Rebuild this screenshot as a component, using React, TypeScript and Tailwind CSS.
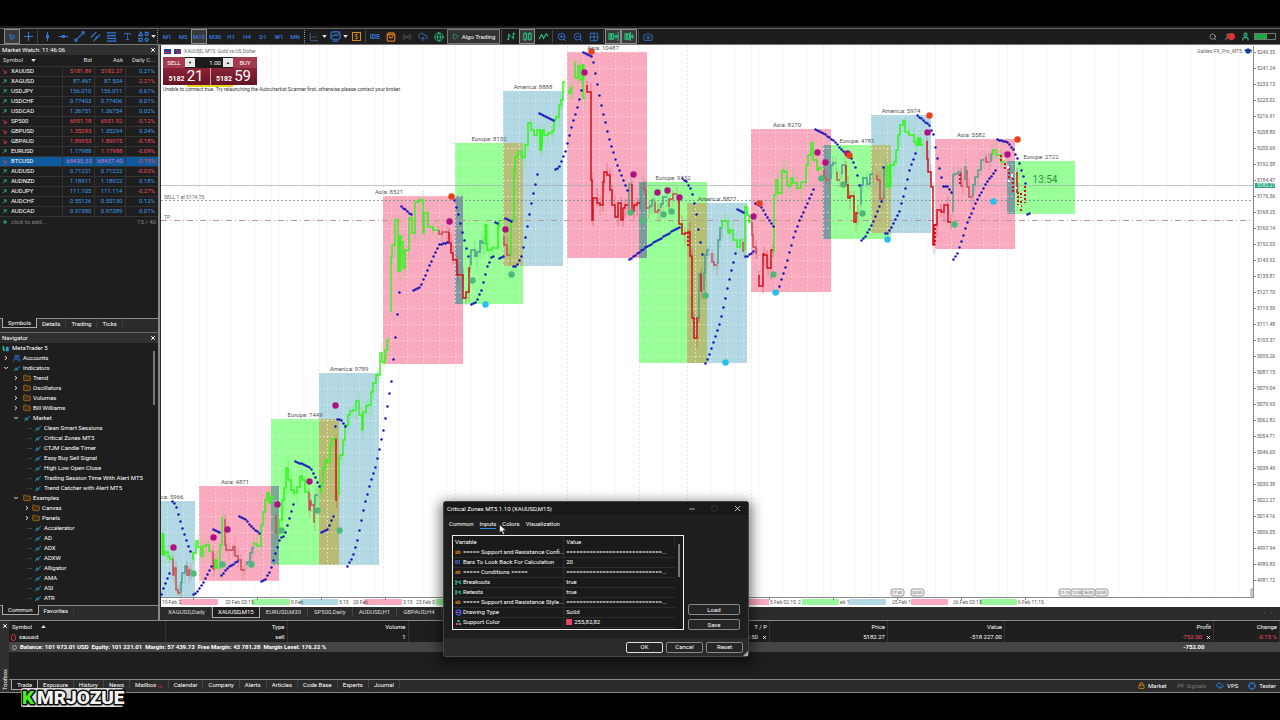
import { ReactNode } from 'react';
import {
  Camera,
  ChartLine,
  ChevronDown,
  ChevronRight,
  CloudUpload,
  Crosshair,
  DollarSign,
  Folder,
  Globe,
  GraduationCap,
  Grid2x2,
  Lock,
  Minus,
  MousePointer2,
  Play,
  Plus,
  Radio,
  Search,
  ShoppingBag,
  Square,
  Type,
  User,
  Users,
  X,
  ZoomIn,
  ZoomOut,
} from 'lucide-react';

type Point = [number, number];
type Direction = 'up' | 'down';

interface Quote {
  symbol: string;
  direction: Direction;
  bid: string;
  ask: string;
  change: string;
  bidColour: string;
  askColour: string;
}

const BLUE = 'text-[#3f9bea]';
const RED = 'text-[#f04c5c]';
const GREEN = 'text-[#26c281]';

const quote = (
  symbol: string,
  direction: Direction,
  bid: string,
  ask: string,
  change: string,
  bidColour = BLUE,
  askColour = bidColour,
): Quote => ({ symbol, direction, bid, ask, change, bidColour, askColour });

const quotes: Quote[] = [
  quote('XAUUSD', 'down', '5181.89', '5182.27', '0.21%', RED),
  quote('XAGUSD', 'up', '87.467', '87.504', '-2.21%'),
  quote('USDJPY', 'up', '156.010', '156.011', '0.61%'),
  quote('USDCHF', 'up', '0.77403', '0.77406', '0.01%'),
  quote('USDCAD', 'up', '1.36751', '1.36754', '0.02%'),
  quote('SP500', 'down', '6951.18', '6951.92', '-0.12%', RED),
  quote('GBPUSD', 'down', '1.35293', '1.35294', '0.34%', RED, BLUE),
  quote('GBPAUD', 'down', '1.89953', '1.89975', '-0.18%', RED),
  quote('EURUSD', 'up', '1.17988', '1.17988', '-0.09%', BLUE, RED),
  quote('BTCUSD', 'down', '68435.33', '68437.40', '-0.75%', 'text-[#c878c8]'),
  quote('AUDUSD', 'up', '0.71221', '0.71222', '-0.03%'),
  quote('AUDNZD', 'up', '1.18911', '1.18922', '0.18%'),
  quote('AUDJPY', 'up', '111.105', '111.114', '-0.27%'),
  quote('AUDCHF', 'up', '0.55126', '0.55130', '0.12%'),
  quote('AUDCAD', 'up', '0.97380', '0.97389', '0.01%'),
];

interface TreeItem {
  label: string;
  level: 0 | 1 | 2 | 3;
  icon: 'app' | 'users' | 'indicator' | 'folder';
  state?: 'open' | 'closed';
}

const leaf = (label: string): TreeItem => ({
  label,
  level: 3,
  icon: 'indicator',
});

const tree: TreeItem[] = [
  { label: 'MetaTrader 5', level: 0, icon: 'app' },
  { label: 'Accounts', level: 1, icon: 'users', state: 'closed' },
  { label: 'Indicators', level: 1, icon: 'indicator', state: 'open' },
  { label: 'Trend', level: 2, icon: 'folder', state: 'closed' },
  { label: 'Oscillators', level: 2, icon: 'folder', state: 'closed' },
  { label: 'Volumes', level: 2, icon: 'folder', state: 'closed' },
  { label: 'Bill Williams', level: 2, icon: 'folder', state: 'closed' },
  { label: 'Market', level: 2, icon: 'indicator', state: 'open' },
  leaf('Clean Smart Sessions'),
  leaf('Critical Zones MT5'),
  leaf('CTJM Candle Timer'),
  leaf('Easy Buy Sell Signal'),
  leaf('High Low Open Close'),
  leaf('Trading Session Time With Alert MT5'),
  leaf('Trend Catcher with Alert MT5'),
  { label: 'Examples', level: 2, icon: 'folder', state: 'open' },
  { label: 'Canvas', level: 3, icon: 'folder', state: 'closed' },
  { label: 'Panels', level: 3, icon: 'folder', state: 'closed' },
  leaf('Accelerator'),
  leaf('AD'),
  leaf('ADX'),
  leaf('ADXW'),
  leaf('Alligator'),
  leaf('AMA'),
  leaf('ASI'),
  leaf('ATR'),
];

const zoneColours = { asia: '#f9aabf', europe: '#98ff96', america: '#b2d9e3' };

interface Zone {
  kind: keyof typeof zoneColours;
  label: string;
  labelX: number;
  box: [number, number, number, number];
}

const zones: Zone[] = [
  { kind: 'america', label: 'ca: 5966', labelX: 172, box: [161, 501, 195, 597] },
  { kind: 'asia', label: 'Asia: 4871', labelX: 235, box: [199, 486, 279, 581] },
  { kind: 'europe', label: 'Europe: 7449', labelX: 305, box: [271, 419, 339, 565] },
  { kind: 'america', label: 'America: 9789', labelX: 349, box: [319, 373, 379, 565] },
  { kind: 'asia', label: 'Asia: 8521', labelX: 389, box: [383, 196, 463, 364] },
  { kind: 'europe', label: 'Europe: 8152', labelX: 489, box: [455, 143, 523, 304] },
  { kind: 'america', label: 'America: 8888', labelX: 533, box: [503, 91, 563, 266] },
  { kind: 'asia', label: 'Asia: 10487', labelX: 603, box: [567, 52, 647, 258] },
  { kind: 'europe', label: 'Europe: 9132', labelX: 673, box: [639, 182, 707, 363] },
  { kind: 'america', label: 'America: 8877', labelX: 717, box: [687, 203, 747, 363] },
  { kind: 'asia', label: 'Asia: 8270', labelX: 787, box: [751, 129, 831, 292] },
  { kind: 'europe', label: 'Europe: 4781', labelX: 857, box: [823, 145, 891, 239] },
  { kind: 'america', label: 'America: 5974', labelX: 901, box: [871, 115, 931, 233] },
  { kind: 'asia', label: 'Asia: 5582', labelX: 971, box: [935, 139, 1015, 249] },
  { kind: 'europe', label: 'Europe: 2722', labelX: 1041, box: [1007, 161, 1075, 214] },
];

const overlaps: [number, number, number, number, string][] = [
  [271, 486, 279, 565, '#7ba796'],
  [319, 419, 339, 565, '#b9bb74'],
  [455, 196, 463, 304, '#7c9c9f'],
  [503, 143, 523, 266, '#b9bf7c'],
  [639, 182, 647, 258, '#7c9c9f'],
  [687, 203, 707, 363, '#b3bf74'],
  [823, 145, 831, 239, '#7c9c9f'],
  [871, 145, 891, 233, '#b9c07c'],
  [1007, 161, 1015, 214, '#7c9c9f'],
];

const sessionStarts = [
  199, 271, 319, 383, 455, 503, 567, 639, 687, 751, 823, 871, 935, 1007,
];

const parse = (text: string): Point[] =>
  text.split(' ').map((pair) => pair.split(',').map(Number) as Point);

const sar = [
  '161,594 163,588 169,573',
  '172,501 175,504 179,517 183,531 187,543 191,553',
  '193,594 197,591 203,582 208,572 212,564',
  '213,529 220,532',
  '221,575 228,567 238,560',
  '239,516 245,519 251,526 259,533',
  '261,581 265,579 270,570 275,553 280,537 284,535 288,521 293,504',
  '295,461 303,464 310,467 314,475 319,486',
  '321,532 327,529 333,516',
  '335,426 337,419 339,419 342,421 346,428',
  '347,566 352,557 357,540 364,505 370,482 375,467 380,444 383,430 391,381 399,292',
  '401,206 412,215',
  '413,290 420,286 427,270 434,254 439,244 448,242',
  '454,200 459,218 463,236 467,252 469,260',
  '471,304 476,301 481,290 487,266 491,257 494,256',
  '495,222 498,223',
  '499,258 503,256',
  '505,218 512,221',
  '513,266 516,266 521,256 525,237 531,203 537,174',
  '539,113 553,120',
  '555,169 559,166 565,151 571,127 578,104 581,90',
  '583,52 591,56 593,62 595,73 597,84 601,105 609,139 617,165 627,190',
  '629,259 647,246 680,226',
  '682,178 686,181 691,190 695,207 699,236 703,260',
  '705,363 708,357 713,342 719,324 723,307 729,279 735,253',
  '737,209 743,212',
  '745,256 747,256 754,250',
  '755,203 760,205 767,217 774,227',
  '777,292 781,279 785,267 793,237 799,220 807,203 813,189',
  '815,129 823,133 833,140 842,150 849,157 852,159 856,170 859,185',
  '861,240 865,236 873,221 881,201',
  '883,167 884,167',
  '885,233 887,233 891,227 899,211 905,188 909,170 915,153',
  '917,115 929,125 933,134 935,147 939,168 943,186 947,186 951,192',
  '953,259 957,253 961,241 967,222 975,203 985,184 995,170',
  '997,139 1007,142 1013,149 1019,163 1025,183',
  '1027,214 1029,213',
].map(parse);

// one dot per bar, the bars are two units apart
function dotsAlong(points: Point[]): Point[] {
  const dots: Point[] = [];
  const last = points[points.length - 1][0];
  for (let x = points[0][0]; x <= last; x += 2) {
    const i = Math.max(
      1,
      points.findIndex((p) => p[0] >= x),
    );
    const [x0, y0] = points[i - 1];
    const [x1, y1] = points[i];
    dots.push([x, y0 + ((y1 - y0) * (x - x0)) / (x1 - x0)]);
  }
  return dots;
}

const runColours = {
  lime: '#35f51e',
  red: '#c8505a',
  strong: '#d3121c',
  teal: '#4f9f8d',
};

const runs: [keyof typeof runColours, string][] = [
  ['lime', '163,533 165,555 168,552 170,557 173,559'],
  ['red', '173,559 174,575 176,568 178,590 180,593'],
  ['teal', '181,593 182,582 185,573 187,566'],
  ['red', '187,566 189,575 191,570'],
  ['lime', '193,560 196,553 198,541 201,547 203,556 206,546 209,545 211,551'],
  ['red', '213,551 214,569 215,560'],
  ['lime', '215,568 217,560 220,568 222,545 223,518'],
  ['red', '225,519 226,545 229,550 233,550 235,547 238,556 241,560 243,570 245,570'],
  ['teal', '247,565 250,562 252,553 254,548'],
  ['lime', '254,542 257,544 261,546 263,525 265,512 267,500 269,493 271,503 274,497'],
  ['red', '276,515 277,533'],
  ['lime', '279,535 282,520 284,500 286,488 288,468 291,480 294,490 297,493 300,487 302,476 305,480 308,492'],
  ['red', '309,492 310,510 311,501 314,505 315,522'],
  ['teal', '315,506 316,495 318,495'],
  ['lime', '321,493 323,485 325,468 327,460 330,462 332,445 335,439'],
  ['strong', '336,439 337,500'],
  ['lime', '339,495 340,458 343,455 345,440 348,425 350,415 353,411 356,410 359,401 362,415 363,430 366,412 368,406 371,405 373,392 376,383 378,375 380,375 382,353 385,362 387,350 389,340'],
  ['lime', '391,312 392,257 395,245 398,220 400,271 403,242 405,268 409,250 412,218 415,233 419,202 423,200 424,233 428,213 433,227 438,230'],
  ['red', '439,230 442,234 447,232 449,232'],
  ['strong', '449,232 451,243 453,253 457,260 458,275 463,275 466,298 469,292 470,268'],
  ['teal', '471,265 475,250 477,256 480,252 482,241 484,243'],
  ['lime', '486,224 487,244 489,250 492,250 498,248 499,226 501,221'],
  ['red', '504,236 507,245 510,255'],
  ['lime', '511,256 514,220 515,170 518,157 522,152 525,157 528,145 531,123 534,130 537,135 540,130 541,150 542,145 544,130 548,135 552,133 554,131 556,120 559,117 561,105 563,100 565,82'],
  ['lime', '569,90 571,93 573,88'],
  ['lime', '575,62 578,78 580,66 583,80 585,98'],
  ['strong', '587,85 591,92 592,180 593,220 597,198 600,203 603,205 604,182 607,172 610,175 612,190 615,205 618,217 621,203 623,220 625,208 628,205'],
  ['teal', '629,212 631,184'],
  ['strong', '632,184 634,211 637,205 640,203'],
  ['teal', '641,207 643,184'],
  ['red', '644,184 646,190 649,208'],
  ['teal', '650,208 652,206 654,200'],
  ['red', '655,202 658,212 660,210'],
  ['teal', '661,208 663,204 667,197'],
  ['red', '669,207 673,199 677,194'],
  ['strong', '679,200 682,224 685,234 688,233 690,232 692,256 694,318 697,338 699,318'],
  ['teal', '699,318 702,274'],
  ['strong', '701,274 702,291'],
  ['teal', '704,290 705,273 707,255 709,250'],
  ['red', '712,253 714,262 717,265'],
  ['teal', '718,264 720,240 722,228'],
  ['lime', '722,228 725,221 728,221 730,233 733,230 737,240 740,247 742,240'],
  ['red', '743,242 744,251'],
  ['lime', '745,250 747,207 749,215 751,222'],
  ['red', '752,222 753,235 756,247 757,253'],
  ['strong', '759,275 763,286 764,254 767,255 768,268 771,268 773,250'],
  ['lime', '774,253 776,195 778,180 782,193 784,170 787,172 788,185 791,186 793,178 797,183 801,188 806,182 808,165 811,155 813,143 817,160 819,170 822,168'],
  ['red', '824,170 826,178 829,180'],
  ['teal', '831,179 833,165 836,163'],
  ['red', '837,172 840,180'],
  ['teal', '842,174 845,165'],
  ['strong', '846,165 848,185 850,198 854,196 856,222 858,213'],
  ['teal', '861,205 863,185 867,178 870,184 873,174'],
  ['red', '877,175 880,180 883,199'],
  ['teal', '884,199 885,168'],
  ['lime', '887,165 890,187 894,165 896,162 898,150 900,135 903,125 905,121 909,132 914,135 916,142 918,145 920,138 923,145'],
  ['strong', '927,141 928,159 931,172 933,187 934,245 937,225 941,210 944,212 948,205 951,222'],
  ['teal', '953,212 954,175 958,174 961,172'],
  ['red', '961,172 963,186'],
  ['teal', '965,180 966,167'],
  ['red', '967,170 969,187 972,197'],
  ['teal', '973,197 975,185 978,177 981,170 984,160'],
  ['red', '986,157 989,162'],
  ['teal', '991,162 992,154'],
  ['lime', '993,155 996,150 1001,155 1005,162'],
  ['strong', '1017,172 1018,192'],
];

// vertical bodies joined by short level strokes
const steps = (points: Point[]) =>
  points
    .map(([x, y], i) => (i === 0 ? `M${x} ${y}` : `V${y}H${x}`))
    .join('');

const wicks = (points: Point[]) =>
  points
    .map(([x, y], i) => `M${x} ${y - 4 - ((i * 5) % 7)}V${y + 5 + ((i * 3) % 8)}`)
    .join('');

const markers: [string, string][] = [
  [
    '#b01283',
    '173,547 213,537 227,529 277,504 309,481 335,405 449,221 505,229 584,72 633,174 657,192 667,190 679,197 753,216 817,152 825,162 847,153 927,132 1007,154',
  ],
  [
    '#4dba7c',
    '193,573 222,564 251,564 281,530 317,510 339,530 472,280 511,274 630,212 642,220 663,214 671,211 705,295 773,274 821,178 843,184 862,213 954,224',
  ],
  ['#e8421c', '451,196 591,51 759,203 849,155 929,115 1017,139'],
  ['#28bff0', '485,304 725,362 775,292 887,239 993,201'],
];

const timeTags: [number, number, string][] = [
  [180, 38, '#f9aabf'],
  [252, 38, '#98f79a'],
  [300, 38, '#b2d9e3'],
  [364, 38, '#f9aabf'],
  [436, 38, '#98f79a'],
  [732, 37, '#f9aabf'],
  [802, 37, '#98f79a'],
  [849, 37, '#b2d9e3'],
  [911, 37, '#f9aabf'],
  [980, 37, '#98f79a'],
];

const timeLabels: [number, string][] = [
  [162, '19 Feb 2'],
  [225, '20 Feb 03:15'],
  [291, '0 Feb'],
  [339, '5:15'],
  [353, '20 Feb'],
  [403, '3:15'],
  [416, '23 Feb 0'],
  [770, '5 Feb 02:15'],
  [798, '2'],
  [840, 'eb 1'],
  [892, '25 Feb 1'],
  [953, '26 Feb 03:15'],
  [1018, '6 Feb 11:15'],
];

const eventTags: [number, string][] = [
  [891, '17:30'],
  [911, '20:00'],
  [1059, '21:15'],
  [1071, '12:00'],
  [1082, '18:00'],
  [1095, '20:00'],
];

function PriceChart() {
  const prices = Array.from({ length: 34 }, (_, i) => 5249.35 - i * 8.11);

  return (
    <svg
      viewBox="161 45 1119 562"
      preserveAspectRatio="xMinYMin meet"
      className="absolute inset-0 h-full w-full"
      role="img"
      aria-label="XAUUSD, M15"
    >
      <defs>
        <clipPath id="plot">
          <rect x="161" y="46" width="1093" height="552" />
        </clipPath>
        <pattern
          id="grid"
          x="183"
          y="52"
          width="16"
          height="16"
          patternUnits="userSpaceOnUse"
        >
          <path
            d="M0.5 0V16M0 0.5H16"
            stroke="#ffffff"
            strokeOpacity="0.3"
            strokeDasharray="2 2"
          />
        </pattern>
      </defs>
      <path
        d={Array.from({ length: 45 }, (_, i) => `M${183 + i * 24}.5 46V597`).join('')}
        stroke="#f5f5f7"
        strokeDasharray="2 2"
      />
      <path
        d={sessionStarts.map((x) => `M${x}.5 46V597`).join('')}
        stroke="#d8d8d8"
        strokeDasharray="1 3"
      />
      <g clipPath="url(#plot)">
        {zones.map(({ kind, box: [x, y, x2, y2] }) => (
          <rect
            key={x}
            x={x}
            y={y}
            width={x2 - x}
            height={y2 - y}
            fill={zoneColours[kind]}
          />
        ))}
        {overlaps.map(([x, y, x2, y2, fill]) => (
          <rect key={x} x={x} y={y} width={x2 - x} height={y2 - y} fill={fill} />
        ))}
        {zones.map(({ box: [x, y, x2, y2] }) => (
          <rect
            key={x}
            x={x}
            y={y}
            width={x2 - x}
            height={y2 - y}
            fill="url(#grid)"
          />
        ))}
      </g>
      <path d="M161 185.5H1254" stroke="#a0aeac" strokeOpacity="0.7" />
      <path d="M161 200.5H1254" stroke="#6f908c" strokeDasharray="2 2" strokeOpacity="0.8" />
      <path d="M161 220.5H1254" stroke="#c09494" strokeDasharray="6 3 1 3" />
      {runs.map(([colour, text]) => (
        <g key={text} fill="none" stroke={runColours[colour]}>
          <path d={wicks(parse(text))} strokeOpacity="0.35" />
          <path d={steps(parse(text))} strokeWidth="1.5" />
        </g>
      ))}
      <path
        d="M163 533V555M583 64V80M400 235V271M486 224V244M541 130V150M890 165V187M920 138V145"
        stroke="#35f51e"
        strokeWidth="3"
      />
      <g fill="none" stroke="#d3121c" strokeDasharray="2 2">
        <path
          d="M1001 155V162M1005 163V170M1009 168V184M1013 178V192M1018 192V205M1021 193V211M1025 186V203"
          strokeWidth="2"
        />
        <path d="M935 224V245M688 232V246M960 174V186" strokeWidth="2" />
      </g>
      <path
        d="M1003 158h2v2h-2zM1007 166h2v3h-2zM1011 174h2v3h-2zM1015 187h2v2h-2zM1020 198h2v2h-2zM1023 192h2v2h-2zM1008 180h2v2h-2zM1019 205h2v2h-2z"
        fill="#f4f4f4"
      />
      <g fill="#1010bc">
        {sar.flatMap(dotsAlong).map(([x, y], i) => (
          <circle key={i} cx={x + 0.5} cy={Math.round(y) + 0.5} r="1.2" />
        ))}
      </g>
      {markers.map(([fill, text]) => (
        <g key={fill} fill={fill}>
          {parse(text).map(([x, y]) => (
            <circle key={x} cx={x + 0.5} cy={y + 0.5} r="3.2" />
          ))}
        </g>
      ))}
      <g fontSize="6" fill="#555555">
        {zones.map(({ label, labelX, box }) => (
          <text key={label} x={labelX} y={box[1] - 2} textAnchor="middle">
            {label}
          </text>
        ))}
      </g>
      <text x="1045" y="183" fontSize="10" fill="#2d8f45" textAnchor="middle">
        13:54
      </text>
      <g fontSize="5" fill="#666666">
        <text x="184" y="53">
          XAUUSD, M15: Gold vs US Dollar
        </text>
        <text x="163" y="91" fill="#333333">
          Unable to connect true. Try relaunching the Autochartist Scanner first, otherwise please contact your broker.
        </text>
        <text x="164" y="199">
          SELL 1 at 5174.75
        </text>
        <text x="164" y="219">TP</text>
        <text x="1242" y="53" textAnchor="end">
          Galileo FX_Pro_MT5
        </text>
      </g>
      <GraduationCap x={1244} y={47} width={8} height={8} fill="#14389c" color="#14389c" />
      <rect x="164" y="49" width="7" height="5" fill="#2c3f94" />
      <path d="M164 52.500h7" stroke="#d03038" />
      <rect x="174" y="49" width="7" height="5" fill="#24408c" />
      <path d="M176 49l2 5M180 49v5" stroke="#d03038" />

      <path d="M1253.5 46V597.500M161 597.500H1254" stroke="#8a8a8a" fill="none" />
      <g fontSize="5" fill="#555555">
        {prices.map((price, i) => (
          <g key={price}>
            <path d={`M1253 ${52 + i * 16}.5h3`} stroke="#888888" />
            <text x="1257" y={54 + i * 16}>
              {price.toFixed(2)}
            </text>
          </g>
        ))}
      </g>
      <rect x="1255" y="183" width="20" height="5" fill="#2aa583" />
      <text x="1257" y="187" fontSize="5" fill="#ffffff">
        5182.27
      </text>
      {eventTags.map(([x, label]) => (
        <g key={x}>
          <rect x={x} y="589" width="13" height="7" rx="2" fill="#f1f1f1" stroke="#999999" />
          <text x={x + 1} y="594" fontSize="4" fill="#555555">
            {label}
          </text>
        </g>
      ))}
      <path d="M1251 589h2v7h-2z" fill="#f1f1f1" stroke="#999999" />
      {timeTags.map(([x, width, fill]) => (
        <rect key={x} x={x} y="599" width={width} height="6" rx="1" fill={fill} />
      ))}
      <path
        d={Array.from({ length: 14 }, (_, i) => `M${193 + i * 64}.5 598v2`).join('')}
        stroke="#888888"
      />
      <g fontSize="5" fill="#555555">
        {timeLabels.map(([x, label]) => (
          <text key={x} x={x} y="604">
            {label}
          </text>
        ))}
      </g>
    </svg>
  );
}

function OneClickTrading() {
  return (
    <div className="absolute left-[2px] top-[12px] w-[94px] text-white">
      <div className="flex h-[11px] justify-between bg-[#a03a4c]">
        <button type="button" className="w-[22px]">
          SELL
        </button>
        <div className="flex flex-1 items-center bg-[#1c1c1c]">
          <button
            type="button"
            aria-label="Less"
            className="h-[9px] w-[10px] bg-[#e8e8e8] text-[4px] text-black"
          >
            ▼
          </button>
          <input
            aria-label="Volume"
            defaultValue="1.00"
            className="w-0 flex-1 bg-transparent px-[2px] text-right"
          />
          <button
            type="button"
            aria-label="More"
            className="h-[9px] w-[10px] bg-[#e8e8e8] text-[4px] text-black"
          >
            ▲
          </button>
        </div>
        <button type="button" className="w-[24px]">
          BUY
        </button>
      </div>
      <div className="grid h-[17px] grid-cols-2 gap-px bg-[#d8a0a8] leading-[17px]">
        {['21', '59'].map((pips) => (
          <div
            key={pips}
            className="flex items-baseline justify-end gap-[2px] overflow-hidden bg-linear-to-b from-[#8c2438] to-[#641424] pr-[6px]"
          >
            <b className="text-[7px]">5182</b>
            <span className="text-[15px]">{pips}</span>
          </div>
        ))}
      </div>
      <div className="mx-auto h-[2px] w-[46px] bg-[#e8d020]" />
    </div>
  );
}

function Tool({
  label,
  active,
  className = 'text-[#3578dc]',
  children,
}: {
  label: string;
  active?: boolean;
  className?: string;
  children: ReactNode;
}) {
  return (
    <button
      type="button"
      aria-label={label}
      className={`flex h-[15px] w-[16px] shrink-0 items-center justify-center ${className} ${
        active ? 'border border-[#8a8a8a] bg-[#3a3a3a]' : ''
      }`}
    >
      {children}
    </button>
  );
}

function Glyph({ d }: { d: string }) {
  return (
    <svg
      viewBox="0 0 12 12"
      className="h-[11px] w-[11px] shrink-0"
      fill="none"
      stroke="currentColor"
      strokeWidth="1.2"
      aria-hidden
    >
      <path d={d} />
    </svg>
  );
}

const Divider = () => <span className="mx-px h-[13px] w-px shrink-0 bg-[#444]" />;

const Grip = () => (
  <span className="mx-px h-[13px] shrink-0 border-l border-dotted border-[#999]" />
);

const Caret = () => (
  <svg viewBox="0 0 6 4" className="h-[3px] w-[5px] shrink-0" aria-hidden>
    <path d="M0 0h6L3 4z" fill="#e8e8e8" />
  </svg>
);

function Toolbar() {
  return (
    <div className="flex h-[17px] shrink-0 items-center border-y border-t-[#666] border-b-[#777] bg-[#1d1d1d] px-[4px]">
      <Tool label="Cursor" active>
        <MousePointer2 size={8} strokeWidth={3} />
      </Tool>
      <Tool label="Crosshair">
        <Glyph d="M6 1V11M1 6H11" />
      </Tool>
      <Divider />
      <Tool label="Vertical line">
        <Glyph d="M6 1V11M5 5h2v2h-2z" />
      </Tool>
      <Tool label="Horizontal line">
        <Glyph d="M1 6H11M5 5h2v2h-2z" />
      </Tool>
      <Tool label="Trend line">
        <Glyph d="M2 10L10 2M1 9h2v2h-2zM9 1h2v2h-2z" />
      </Tool>
      <Tool label="Channel">
        <Glyph d="M1 7L7 1M4 11L11 4M1 6h1v1M10 4h1M6 8l2-2" />
      </Tool>
      <Tool label="Fibonacci">
        <Glyph d="M1 2H11M1 5H11M1 8H11M1 11H11M2 1v2M10 9v2" />
      </Tool>
      <Tool label="Text">
        <Type size={9} />
      </Tool>
      <Tool label="Objects">
        <Glyph d="M3 1L5 5H1zM8 1.500h3v3h-3zM1 8h3.500v3h-3.500zM9.500 7.500L11.500 9.500L9.500 11.500L7.500 9.500z" />
      </Tool>
      <Caret />
      <Grip />
      {['M1', 'M5', 'M15', 'M30', 'H1', 'H4', 'D1', 'W1', 'MN'].map((frame) => (
        <Tool key={frame} label={frame} active={frame === 'M15'}>
          <span className="font-semibold">{frame}</span>
        </Tool>
      ))}
      <Grip />
      <Tool label="Line chart" className="text-[#4a6a9c]">
        <ChartLine size={10} />
      </Tool>
      <Caret />
      <Tool label="Templates">
        <Glyph d="M1 3a2 2 0 0 1 2-2h6a2 2 0 0 1 2 2v4a2 2 0 0 1-2 2h-6a2 2 0 0 1-2-2zM2 6l3-2 2 1 3-2M3 11h6" />
      </Tool>
      <Caret />
      <Tool label="Deposit" className="text-[#d88a1c]">
        <span className="border border-current">
          <DollarSign size={7} />
        </span>
      </Tool>
      <Divider />
      <Tool label="IDE">
        <span className="text-[7px] font-bold">IDE</span>
      </Tool>
      <Tool label="Market" className="text-[#d8781c]">
        <ShoppingBag size={10} strokeWidth={3} />
      </Tool>
      <Tool label="Signals" className="text-[#555]">
        <Radio size={10} />
      </Tool>
      <Tool label="VPS">
        <CloudUpload size={10} />
      </Tool>
      <Tool label="Web">
        <Globe size={10} className={GREEN} />
      </Tool>
      <button
        type="button"
        className="flex h-[15px] w-[53px] shrink-0 items-center justify-center gap-[3px] border border-[#777] bg-[#333] text-white"
      >
        <Play size={7} className={GREEN} /> Algo Trading
      </button>
      <Divider />
      <Tool label="Bars" className={GREEN}>
        <Glyph d="M3 3V10M1 9H3M3 5H5M8 2V9M6 7H8M8 3H10" />
      </Tool>
      <Tool label="Candles" active className={GREEN}>
        <Glyph d="M2 3h3v6h-3zM7 3h3v6h-3zM3.500 1v2M3.500 9v2M8.500 1v2M8.500 9v2" />
      </Tool>
      <Tool label="Line" className={GREEN}>
        <Glyph d="M1 9L4 4L6 8L9 3L11 6" />
      </Tool>
      <Divider />
      <Tool label="Zoom in">
        <ZoomIn size={10} />
      </Tool>
      <Tool label="Zoom out">
        <ZoomOut size={10} />
      </Tool>
      <Tool label="Tile windows">
        <Grid2x2 size={10} />
      </Tool>
      <Divider />
      <Tool label="Auto scroll" active className={GREEN}>
        <Glyph d="M1 3h2v6h-2zM4 3h2v6h-2zM6 6h4M8 4l2 2-2 2M11 1v10" />
      </Tool>
      <Tool label="Chart shift" active className={GREEN}>
        <Glyph d="M1 3h2v6h-2zM4 3h2v6h-2zM7 1v10M11 6h-3M10 4l-2 2 2 2" />
      </Tool>
      <Divider />
      <Tool label="Screenshot">
        <Camera size={10} />
      </Tool>
      <div className="ml-auto flex items-center">
        <Tool label="Search" className="text-[#bbb]">
          <Search size={8} />
        </Tool>
        <Tool label="Notifications" className="text-[#bbb]">
          <span className="flex">
            <User size={8} />
            <span className="-ml-[4px] h-[7px] w-[7px] rounded-full bg-[#e03030]" />
          </span>
        </Tool>
        <Tool label="Account" className={GREEN}>
          <User size={9} strokeWidth={3} />
        </Tool>
        <span className="ml-px flex h-[7px] w-[22px] border border-[#777]">
          <span className="w-[12px] bg-[#22a843]" />
        </span>
      </div>
    </div>
  );
}

function PanelTitle({ children }: { children: ReactNode }) {
  return (
    <div className="flex h-[10px] shrink-0 items-center justify-between bg-[#303030] px-[2px] text-white">
      <span>{children}</span>
      <button type="button" aria-label="Close">
        <X size={6} strokeWidth={4} />
      </button>
    </div>
  );
}

function PanelTabs({ tabs }: { tabs: string[] }) {
  return (
    <div className="flex h-[10px] shrink-0 border-t border-[#8a8a8a] bg-[#2b2b2b] pl-[2px] text-white">
      {tabs.map((tab, i) => (
        <button
          key={tab}
          type="button"
          className={
            i === 0
              ? '-mt-px h-[10px] border border-t-0 border-[#aaa] bg-[#1e1e1e] px-[5px]'
              : 'h-[9px] border-r border-[#3c3c3c] px-[5px]'
          }
        >
          {tab}
        </button>
      ))}
    </div>
  );
}

function MarketWatch() {
  return (
    <section className="flex h-[283px] flex-col">
      <PanelTitle>Market Watch: 11:46:06</PanelTitle>
      <table className="w-full table-fixed border-collapse">
        <colgroup>
          <col className="w-[62px]" />
          <col className="w-[32px]" />
          <col className="w-[31px]" />
          <col />
        </colgroup>
        <thead>
          <tr className="h-[11px] text-[#ddd]">
            <th className="pl-[3px] text-left font-normal">
              <span className="flex items-center gap-[8px]">
                Symbol <Caret />
              </span>
            </th>
            <th className="pr-[2px] text-right font-normal">Bid</th>
            <th className="pr-[2px] text-right font-normal">Ask</th>
            <th className="pr-[3px] text-right font-normal">Daily C...</th>
          </tr>
        </thead>
        <tbody>
          {quotes.map((row) => (
            <tr
              key={row.symbol}
              className={`h-[10px] border-y border-[#333] text-right ${
                row.symbol === 'BTCUSD' ? 'bg-[#0d5a9c]' : ''
              }`}
            >
              <td className="border-r border-[#333] text-left text-white">
                <span className="flex items-center gap-[4px] pl-[2px]">
                  <svg
                    viewBox="0 0 6 6"
                    className="h-[5px] w-[5px]"
                    fill="none"
                    stroke={row.direction === 'up' ? '#2dbd78' : '#d8404c'}
                    aria-hidden
                  >
                    <path d={row.direction === 'up' ? 'M1 5L5 1M2 1H5V4' : 'M1 1L5 5M2 5H5V2'} />
                  </svg>
                  {row.symbol}
                </span>
              </td>
              <td className={`border-r border-[#333] pr-[2px] ${row.bidColour}`}>{row.bid}</td>
              <td className={`border-r border-[#333] pr-[2px] ${row.askColour}`}>{row.ask}</td>
              <td className={`pr-[3px] ${row.change.startsWith('-') ? RED : BLUE}`}>
                {row.change}
              </td>
            </tr>
          ))}
        </tbody>
      </table>
      <div className="flex h-[10px] items-center gap-[3px] px-[2px] text-[#888]">
        <Plus size={6} strokeWidth={4} className="text-[#2dbd78]" />
        click to add...
        <span className="ml-auto">15 / 40</span>
      </div>
      <div className="mt-auto">
        <PanelTabs tabs={['Symbols', 'Details', 'Trading', 'Ticks']} />
      </div>
    </section>
  );
}

const indents = ['pl-[2px]', 'pl-[3px]', 'pl-[13px]', 'pl-[24px]'];

function TreeIcon({ icon }: { icon: TreeItem['icon'] }) {
  if (icon === 'folder') {
    return <Folder size={8} color="#b8781c" fill="#4a3010" />;
  }
  if (icon === 'users') {
    return <Users size={8} color="#3070d8" strokeWidth={3} />;
  }
  if (icon === 'app') {
    return (
      <svg viewBox="0 0 8 8" className="h-[7px] w-[8px]" fill="none" aria-hidden>
        <path d="M1 1v3a2 2 0 0 0 2 2" stroke="#2dbd78" strokeWidth="2" />
        <path d="M4 2h2a1 1 0 0 1 1 1v4H4z" fill="#22a8d8" />
      </svg>
    );
  }
  return (
    <svg viewBox="0 0 8 8" className="h-[7px] w-[8px]" fill="none" aria-hidden>
      <path d="M1 7L3 3L4 6L7 1" stroke="#2b9cc8" />
    </svg>
  );
}

function Navigator() {
  return (
    <section className="flex min-h-0 flex-1 flex-col border-t border-[#666]">
      <PanelTitle>Navigator</PanelTitle>
      <div className="flex min-h-0 flex-1 overflow-hidden">
        <ul className="flex-1 text-white">
          {tree.map((item) => (
            <li
              key={item.label}
              className={`flex h-[10px] items-center gap-[2px] ${indents[item.level]}`}
            >
              {item.state === 'open' && <ChevronDown size={6} strokeWidth={4} />}
              {item.state === 'closed' && <ChevronRight size={6} strokeWidth={4} />}
              {item.level > 0 && item.level < 3 && <span />}
              {item.level === 3 && !item.state && (
                <span className="ml-[3px] w-[5px] border-t border-dotted border-[#555]" />
              )}
              <TreeIcon icon={item.icon} />
              <span className="whitespace-nowrap">{item.label}</span>
            </li>
          ))}
        </ul>
        <span className="mr-[3px] mt-[8px] h-[54px] w-[2px] bg-[#777]" />
      </div>
      <PanelTabs tabs={['Common', 'Favorites']} />
      <div className="h-[5px] bg-[#2b2b2b]" />
    </section>
  );
}

const chartTabs = [
  'XAGUSD,Daily',
  'XAUUSD,M15',
  'EURUSD,M30',
  'SP500,Daily',
  'AUDUSD,H1',
  'GBPAUD,H4',
];

const toolboxTabs = [
  'Trade',
  'Exposure',
  'History',
  'News',
  'Mailbox',
  'Calendar',
  'Company',
  'Alerts',
  'Articles',
  'Code Base',
  'Experts',
  'Journal',
];

function Toolbox() {
  return (
    <section className="flex h-[73px] shrink-0 border-y border-[#888] bg-[#1e1e1e] text-white">
      <div className="flex w-[9px] flex-col items-center justify-between bg-[#2f2f2f] py-[2px]">
        <button type="button" aria-label="Close toolbox">
          <X size={6} strokeWidth={4} />
        </button>
        <span className="rotate-180 [writing-mode:vertical-rl]">Toolbox</span>
      </div>
      <div className="flex min-w-0 flex-1 flex-col">
        <table className="w-full table-fixed border-collapse text-right">
          <colgroup>
            <col className="w-[156px]" />
            <col className="w-[122px]" />
            <col className="w-[121px]" />
            <col />
            <col className="w-[60px]" />
            <col className="w-[118px]" />
            <col className="w-[117px]" />
            <col className="w-[209px]" />
            <col className="w-[66px]" />
          </colgroup>
          <thead>
            <tr className="h-[11px] [&>th]:border-r [&>th]:border-[#333] [&>th]:pr-[2px] [&>th]:font-normal">
              <th className="pl-[3px] text-left">
                <span className="flex items-center gap-[9px]">
                  Symbol
                  <span className="rotate-180">
                    <Caret />
                  </span>
                </span>
              </th>
              <th>Type</th>
              <th>Volume</th>
              <th aria-label="Time" />
              <th>T / P</th>
              <th>Price</th>
              <th>Value</th>
              <th className="whitespace-nowrap">Profit</th>
              <th>Change</th>
            </tr>
          </thead>
          <tbody>
            <tr className="h-[10px] [&>td]:border-r [&>td]:border-[#333] [&>td]:pr-[2px]">
              <td className="pl-[2px] text-left">
                <span className="flex items-center gap-[3px]">
                  <span className="h-[7px] w-[5px] rounded-sm border border-[#d03848]" />
                  xauusd
                </span>
              </td>
              <td>sell</td>
              <td>1</td>
              <td />
              <td>
                <span className="flex items-center justify-end gap-[4px]">
                  5174.50 <X size={5} strokeWidth={4} />
                </span>
              </td>
              <td>5182.27</td>
              <td>-518 227.00</td>
              <td>
                <span className="flex items-center justify-end gap-[4px]">
                  <span className={RED}>-752.00</span> <X size={5} strokeWidth={4} />
                </span>
              </td>
              <td className={RED}>-0.15 %</td>
            </tr>
            <tr className="h-[10px] bg-[#454545] font-bold">
              <td colSpan={7} className="whitespace-pre pl-[3px] text-left">
                <span className="flex items-center gap-[3px]">
                  <span className="h-[5px] w-[5px] rounded-full border border-[#aaa]" />
                  {'Balance: 101 973.01 USD  Equity: 101 221.01  Margin: 57 439.73  Free Margin: 43 781.28  Margin Level: 176.22 %'}
                </span>
              </td>
              <td className="pr-[9px]">-752.00</td>
              <td />
            </tr>
          </tbody>
        </table>
        <div className="mt-auto flex h-[13px] items-start border-t border-[#888] bg-[#2b2b2b] pl-[2px] leading-[9px]">
          {toolboxTabs.map((tab, i) => (
            <button
              key={tab}
              type="button"
              className={
                i === 0
                  ? 'h-[10px] border border-t-0 border-[#aaa] bg-[#1e1e1e] px-[5px]'
                  : 'border-r border-[#444] px-[5px]'
              }
            >
              {tab}
              {tab === 'Mailbox' && <sub className="px-px text-[4px] text-[#e03040]">10</sub>}
            </button>
          ))}
          <div className="ml-auto flex items-center gap-[10px] pr-[4px] pt-px">
            <a href="#market" className="flex items-center gap-[3px]">
              <Lock size={7} className="text-[#d8841c]" strokeWidth={3} /> Market
            </a>
            <a href="#signals" className="flex items-center gap-[3px] text-[#777]">
              <Radio size={7} /> Signals
            </a>
            <a href="#vps" className="flex items-center gap-[3px]">
              <CloudUpload size={8} className="text-[#2b7de0]" strokeWidth={3} /> VPS
            </a>
            <a href="#tester" className="flex items-center gap-[3px]">
              <Crosshair size={8} className="text-[#2b7de0]" strokeWidth={3} /> Tester
            </a>
          </div>
        </div>
      </div>
    </section>
  );
}

const line = '=============================...';

type InputKind = 'ab' | 'int' | 'bool' | 'enum' | 'color';

const inputs: { icon: InputKind; name: string; value: string }[] = [
  { icon: 'ab', name: '===== Support and Resistance Confi...', value: line },
  { icon: 'int', name: 'Bars To Look Back For Calculation', value: '20' },
  { icon: 'ab', name: '===== Conditions =====', value: line },
  { icon: 'bool', name: 'Breakouts', value: 'true' },
  { icon: 'bool', name: 'Retests', value: 'true' },
  { icon: 'ab', name: '===== Support and Resistance Style...', value: line },
  { icon: 'enum', name: 'Drawing Type', value: 'Solid' },
  { icon: 'color', name: 'Support Color', value: '255,82,82' },
];

function InputIcon({ icon }: { icon: InputKind }) {
  if (icon === 'ab') {
    return <span className="w-[7px] shrink-0 text-[5px] font-bold text-[#d8841c]">ab</span>;
  }
  if (icon === 'int') {
    return <span className="w-[7px] shrink-0 text-[5px] font-bold text-[#6a6af0]">01</span>;
  }
  return (
    <svg viewBox="0 0 7 7" className="h-[7px] w-[7px] shrink-0" fill="none" aria-hidden>
      {icon === 'bool' && (
        <path d="M1 1v5M1 3h3l2-1M4 3l2 2" stroke="#2dbd88" strokeWidth="1.2" />
      )}
      {icon === 'enum' && (
        <>
          <circle cx="3.500" cy="3.500" r="2.500" stroke="#3a5ae8" strokeWidth="1.3" />
          <path d="M1 3.500h5" stroke="#d04070" />
        </>
      )}
      {icon === 'color' && (
        <>
          <circle cx="3.500" cy="2" r="1.300" fill="#2dbd88" />
          <circle cx="2" cy="5" r="1.300" fill="#e04a58" />
          <circle cx="5" cy="5" r="1.300" fill="#8a8a8a" />
        </>
      )}
    </svg>
  );
}

function DialogButton({ children, main }: { children: ReactNode; main?: boolean }) {
  return (
    <button
      type="button"
      className={`h-[11px] w-full rounded-[2px] border bg-[#262626] ${
        main ? 'border-[#ddd]' : 'border-[#888]'
      }`}
    >
      {children}
    </button>
  );
}

function IndicatorDialog() {
  return (
    <div
      role="dialog"
      aria-label="Critical Zones MT5 1.10 (XAUUSD,M15)"
      className="absolute left-[443px] top-[501px] w-[306px] rounded-[3px] border border-[#444] bg-[#1f1f1f] text-white shadow-[0_4px_12px_4px_rgba(0,0,0,0.45)]"
    >
      <div className="flex h-[13px] items-center bg-[#191919] pl-[3px]">
        Critical Zones MT5 1.10 (XAUUSD,M15)
        <div className="ml-auto flex items-center gap-[15px] pr-[6px]">
          <Minus size={8} />
          <Square size={7} className="text-[#444]" />
          <X size={9} />
        </div>
      </div>
      <div className="flex gap-[6px] px-[5px] pt-[5px]">
        {['Common', 'Inputs', 'Colors', 'Visualization'].map((tab) => (
          <button
            key={tab}
            type="button"
            className={
              tab === 'Inputs' ? 'border-b border-[#2b8ae8]' : 'border-b border-transparent'
            }
          >
            {tab}
          </button>
        ))}
      </div>
      <div className="flex items-end gap-[4px] px-[8px] pb-[8px] pt-[6px]">
        <div className="flex h-[95px] w-[232px] overflow-hidden border border-[#eee] bg-[#1a1a1a]">
          <table className="h-[91px] w-[222px] table-fixed border-collapse">
            <thead>
              <tr className="h-[11px] text-left [&>th]:border-r [&>th]:border-[#2c2c2c] [&>th]:pl-[2px] [&>th]:font-normal">
                <th>Variable</th>
                <th>Value</th>
              </tr>
            </thead>
            <tbody>
              {inputs.map((input, i) => (
                <tr key={i} className="h-[10px] border-b border-[#2c2c2c] [&>td]:whitespace-nowrap">
                  <td className="border-r border-[#2c2c2c] pl-[2px]">
                    <span className="flex h-[8px] items-center gap-px">
                      <InputIcon icon={input.icon} />
                      {input.name}
                    </span>
                  </td>
                  <td className="pl-[2px]">
                    <span className="flex h-[8px] items-center gap-[2px]">
                      {input.icon === 'color' && <span className="h-[6px] w-[6px] bg-[#e8446a]" />}
                      {input.value}
                    </span>
                  </td>
                </tr>
              ))}
            </tbody>
          </table>
          <span className="ml-[3px] mt-[8px] h-[33px] w-[2px] bg-[#777]" />
        </div>
        <div className="flex w-[52px] flex-col gap-[4px]">
          <DialogButton>Load</DialogButton>
          <DialogButton>Save</DialogButton>
        </div>
      </div>
      <div className="flex h-[18px] items-center justify-end gap-[3px] bg-[#2b2b2b] pr-[5px]">
        <div className="w-[37px]">
          <DialogButton main>OK</DialogButton>
        </div>
        <div className="w-[37px]">
          <DialogButton>Cancel</DialogButton>
        </div>
        <div className="w-[37px]">
          <DialogButton>Reset</DialogButton>
        </div>
      </div>
      <svg
        viewBox="0 0 8 11"
        className="absolute left-[55px] top-[22px] h-[11px] w-[8px]"
        aria-hidden
      >
        <path
          d="M0.500 0.500V8.500L2.500 7L4 10.500L5.500 10L4 6.500H7z"
          fill="#fff"
          stroke="#000"
          strokeWidth="0.500"
        />
      </svg>
      <svg
        viewBox="0 0 5 5"
        className="absolute bottom-0 right-0 h-[5px] w-[5px]"
        aria-hidden
      >
        <path d="M5 0V5H0z" fill="#aaa" />
      </svg>
    </div>
  );
}

function Watermark() {
  return (
    <svg
      viewBox="0 0 108 26"
      className="absolute bottom-[9px] left-[18px] h-[26px] w-[108px]"
      fontSize="19"
      fontWeight="900"
      strokeLinejoin="round"
    >
      <rect x="3" y="3" width="102" height="19" rx="2" fill="#d8d8d8" />
      <g paintOrder="stroke" stroke="#0a0a0a" strokeWidth="3">
        <text x="4" y="19" fill="#4cf020">
          K
        </text>
        <text x="19" y="19" fill="#f4f4f4">
          MRJOZUE
        </text>
      </g>
    </svg>
  );
}

export default function App() {
  return (
    <div className="relative flex h-screen w-full flex-col overflow-hidden bg-black font-[Roboto,sans-serif] text-[6px] leading-[8px]">
      <div className="h-[28px] shrink-0 border-b-2 border-[#1c1c1c]" />
      <Toolbar />
      <main className="flex min-h-0 flex-1 bg-[#2b2b2b]">
        <aside className="flex w-[158px] shrink-0 flex-col bg-[#1e1e1e]">
          <MarketWatch />
          <div className="h-[4px] bg-[#2b2b2b]" />
          <Navigator />
        </aside>
        <div className="flex min-w-0 flex-1 flex-col border-l-2 border-[#8a8a8a] pl-px">
          <div className="relative min-h-0 flex-1 bg-white">
            <PriceChart />
            <OneClickTrading />
          </div>
          <nav className="flex h-[13px] items-start pl-px leading-[10px] text-[#ddd]">
            {chartTabs.map((tab) => (
              <a
                key={tab}
                href={`#${tab}`}
                className={
                  tab === 'XAUUSD,M15'
                    ? 'h-[11px] border border-t-0 border-[#aaa] bg-[#1e1e1e] px-[5px] text-white'
                    : 'border-r border-[#444] px-[6px]'
                }
              >
                {tab}
              </a>
            ))}
            <span className="ml-auto pr-[8px] text-[#666]">‹ &nbsp; ›</span>
          </nav>
        </div>
      </main>
      <Toolbox />
      <div className="h-[27px] shrink-0" />
      <IndicatorDialog />
      <Watermark />
    </div>
  );
}
